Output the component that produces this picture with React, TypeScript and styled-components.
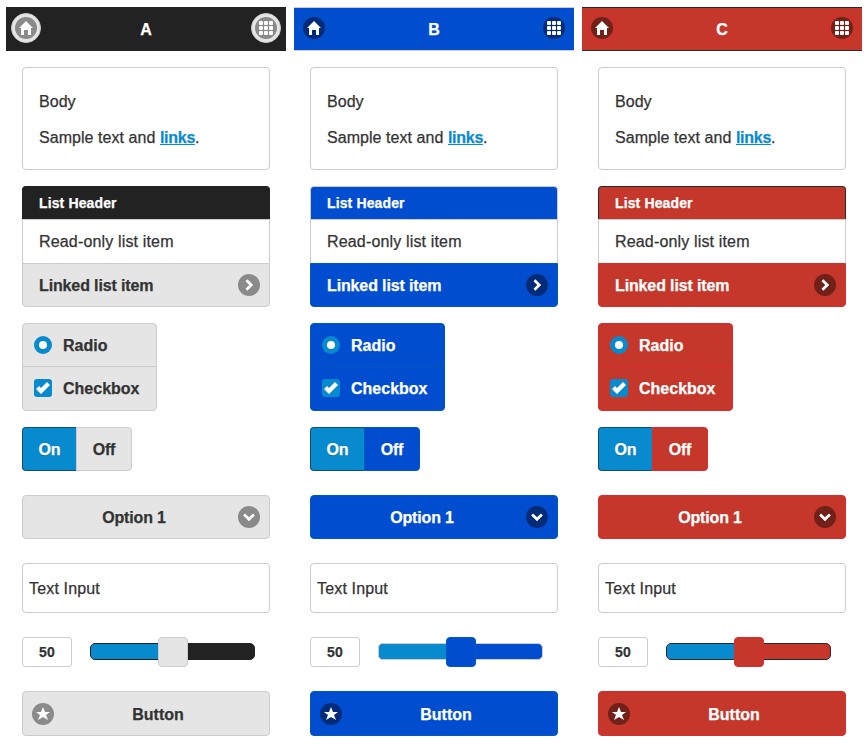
import React from "react";
import styled, { createGlobalStyle, ThemeProvider } from "styled-components";

const GlobalStyle = createGlobalStyle`
  * { box-sizing: border-box; }
  body { margin: 0; background: #fff; }
  body, input, button { font-family: "Liberation Sans", Arial, Helvetica, sans-serif; -webkit-text-stroke: 0.25px currentColor; }
`;

interface Swatch {
  name: string;
  bar: string;
  barBorder: string;
  button: string;
  buttonBorder: string;
  buttonText: string;
  disc: string;
}

const swatches: Swatch[] = [
  { name: "A", bar: "#222", barBorder: "#222", button: "#e5e5e5", buttonBorder: "#ccc", buttonText: "#333", disc: "#8a8a8a" },
  { name: "B", bar: "#004ecf", barBorder: "#ccc", button: "#004ecf", buttonBorder: "#0058b8", buttonText: "#fff", disc: "#002b78" },
  { name: "C", bar: "#c4372a", barBorder: "#2a2a2a", button: "#c4372a", buttonBorder: "#dc2c2e", buttonText: "#fff", disc: "#71201a" },
];

const active = "#078ace";

const Page = styled.main`
  display: flex;
  gap: 8px;
  padding: 7px 6px 11px;
  color: #333;
  font-size: 16px;
  line-height: 20px;
  white-space: nowrap;
`;

const Column = styled.section`
  width: 280px;
`;

const Bar = styled.header`
  display: flex;
  align-items: center;
  justify-content: space-between;
  height: 44px;
  padding: 0 5px 2px;
  background: ${({ theme }) => theme.bar};
  border: solid ${({ theme }) => theme.barBorder};
  border-width: 1px 0;
`;

const Title = styled.h1`
  margin: 4px 0 0;
  color: #fff;
  font-size: 16px;
`;

const RoundButton = styled.button`
  display: grid;
  place-items: center;
  width: 30px;
  height: 30px;
  padding: 0;
  background: ${({ theme }) => theme.button};
  border: 1px solid ${({ theme }) => theme.buttonBorder};
  border-radius: 50%;
`;

const Disc = styled.span`
  display: grid;
  flex: none;
  place-items: center;
  width: 22px;
  height: 22px;
  background: ${({ theme }) => theme.disc};
  border-radius: 50%;
`;

const Glyph = styled.svg`
  display: block;
  width: 14px;
  height: 14px;
  fill: #fff;
`;

const Content = styled.div`
  padding: 16px 16px 0;
`;

const Panel = styled.div`
  height: 103px;
  padding: 24px 16px;
  border: 1px solid #ccc;
  border-radius: 4px;
`;

const Paragraph = styled.p`
  margin: 0 0 16px;
  letter-spacing: 0.05px;
`;

const Link = styled.a`
  color: ${active};
  font-weight: bold;
  letter-spacing: -0.25px;
  text-decoration: underline;
`;

const List = styled.ul`
  margin: 16px 0;
  padding: 0;
  list-style: none;
`;

const ListHeader = styled.li`
  height: 33px;
  padding: 6px 16px;
  color: #fff;
  font-size: 14px;
  font-weight: bold;
  letter-spacing: 0.13px;
  background: ${({ theme }) => theme.bar};
  border: 1px solid ${({ theme }) => theme.barBorder};
  border-bottom: 0;
  border-radius: 4px 4px 0 0;
`;

const ListItem = styled.li`
  height: 44px;
  padding: 12px 16px 10px;
  letter-spacing: 0.16px;
  border: 1px solid #ccc;
  border-bottom: 0;
`;

const LinkedItem = styled.li`
  display: flex;
  align-items: center;
  justify-content: space-between;
  height: 44px;
  padding: 0 9px 0 16px;
  color: ${({ theme }) => theme.buttonText};
  font-weight: bold;
  letter-spacing: -0.13px;
  background: ${({ theme }) => theme.button};
  border: 1px solid ${({ theme }) => theme.buttonBorder};
  border-radius: 0 0 4px 4px;
`;

const Label = styled.span`
  padding-top: 2px;
`;

const Choices = styled.div`
  width: 135px;
  height: 88px;
  color: ${({ theme }) => theme.buttonText};
  font-weight: bold;
  background: ${({ theme }) => theme.button};
  border: 1px solid ${({ theme }) => theme.buttonBorder};
  border-radius: 4px;
`;

const Choice = styled.label<{ $divided?: boolean }>`
  display: flex;
  align-items: center;
  gap: 11px;
  height: ${({ $divided }) => ($divided ? 43 : 42)}px;
  padding-left: 11px;
  border-top: ${({ $divided, theme }) => ($divided ? `1px solid ${theme.buttonBorder}` : "0")};
`;

const Mark = styled.span<{ $round?: boolean }>`
  display: grid;
  place-items: center;
  width: 18px;
  height: 18px;
  background: ${active};
  border-radius: ${({ $round }) => ($round ? "50%" : "3px")};
`;

const Dot = styled.span`
  width: 8px;
  height: 8px;
  background: #fff;
  border-radius: 50%;
`;

const Toggle = styled.div`
  display: flex;
  margin: 16px 0 24px;
  font-weight: bold;
`;

const ToggleOn = styled.span`
  display: grid;
  place-items: center;
  width: 54px;
  height: 44px;
  padding-top: 2px;
  color: #fff;
  background: ${active};
  border: 1px solid #144b70;
  border-right: 0;
  border-radius: 4px 0 0 4px;
  text-shadow: 0 1px 0 #1c5f88;
`;

const ToggleOff = styled.span`
  display: grid;
  place-items: center;
  width: 56px;
  height: 44px;
  padding-top: 2px;
  letter-spacing: -0.2px;
  color: ${({ theme }) => theme.buttonText};
  background: ${({ theme }) => theme.button};
  border: 1px solid ${({ theme }) => theme.buttonBorder};
  border-radius: 0 4px 4px 0;
`;

const WideButton = styled.button<{ $height: number }>`
  display: grid;
  grid-template-columns: 22px 1fr 22px;
  align-items: center;
  width: 100%;
  height: ${({ $height }) => $height}px;
  padding: 0 9px;
  color: ${({ theme }) => theme.buttonText};
  font-size: 16px;
  font-weight: bold;
  background: ${({ theme }) => theme.button};
  border: 1px solid ${({ theme }) => theme.buttonBorder};
  border-radius: 4px;
`;

const SelectLabel = styled.span`
  grid-column: 2;
  padding: 2px 24px 0 0;
  letter-spacing: -0.15px;
`;

const ButtonLabel = styled.span`
  padding-top: 2px;
  padding-left: 24px;
`;

const WideDisc = styled(Disc)`
  margin: 0;
`;

const TextField = styled.input`
  display: block;
  width: 100%;
  height: 50px;
  margin: 24px 0;
  padding: 2px 6px 0;
  color: #333;
  font-size: 16px;
  letter-spacing: 0.16px;
  background: #fff;
  border: 1px solid #ccc;
  border-radius: 4px;
`;

const SliderRow = styled.div`
  display: flex;
  align-items: center;
  gap: 18px;
  margin-bottom: 24px;
`;

const NumberField = styled.input`
  width: 50px;
  height: 30px;
  padding: 0;
  color: #333;
  font-size: 14px;
  font-weight: bold;
  letter-spacing: 0.3px;
  text-align: center;
  background: #fff;
  border: 1px solid #ccc;
  border-radius: 3px;
`;

const Track = styled.div`
  position: relative;
  width: 165px;
  height: 17px;
  margin-top: -1px;
  background: ${({ theme }) => theme.bar};
  border: 1px solid ${({ theme }) => theme.barBorder};
  border-radius: 5px;
`;

const Fill = styled.div`
  width: 50%;
  height: 100%;
  background: ${active};
  border-radius: 4px 0 0 4px;
`;

const Handle = styled.div`
  position: absolute;
  top: -7px;
  left: 67px;
  width: 30px;
  height: 30px;
  background: ${({ theme }) => theme.button};
  border: 1px solid ${({ theme }) => theme.buttonBorder};
  border-radius: 4px;
`;

const shapes = {
  home: "M7 0 0 7H2V14H5V9H9V14H12V7H14Z",
  right: "M3.5 3.2 5.4 1.2 11.2 7 5.4 12.8 3.5 10.8 7.2 7Z",
  down: "M3 3.5 1.2 5.4 7 11.2 12.8 5.4 11 3.5 7 7.2Z",
  check: "M14 4 11 1 5 7 3 5 0 8 5 13Z",
  star: "M7 0 9 5H14L10 8 12 13 7 10 2 13 4 8 0 5H5Z",
};

const Icon = ({ shape }: { shape: keyof typeof shapes }) => (
  <Glyph viewBox="0 0 14 14"><path d={shapes[shape]} /></Glyph>
);

const GridIcon = () => (
  <Glyph viewBox="0 0 14 14">
    {[0, 5, 10].map((y) => [0, 5, 10].map((x) => (
      <rect key={`${x}-${y}`} x={x} y={y} width="4" height="4" rx="0.9" />
    )))}
  </Glyph>
);

const SwatchColumn = ({ swatch }: { swatch: Swatch }) => (
  <ThemeProvider theme={swatch}>
    <Column>
      <Bar>
        <RoundButton aria-label="Home"><Disc><Icon shape="home" /></Disc></RoundButton>
        <Title>{swatch.name}</Title>
        <RoundButton aria-label="Grid"><Disc><GridIcon /></Disc></RoundButton>
      </Bar>
      <Content>
        <Panel>
          <Paragraph>Body</Paragraph>
          <Paragraph>Sample text and <Link>links</Link>.</Paragraph>
        </Panel>
        <List>
          <ListHeader>List Header</ListHeader>
          <ListItem>Read-only list item</ListItem>
          <LinkedItem>
            <Label>Linked list item</Label>
            <Disc><Icon shape="right" /></Disc>
          </LinkedItem>
        </List>
        <Choices>
          <Choice><Mark $round><Dot /></Mark><Label>Radio</Label></Choice>
          <Choice $divided><Mark><Icon shape="check" /></Mark><Label>Checkbox</Label></Choice>
        </Choices>
        <Toggle>
          <ToggleOn>On</ToggleOn>
          <ToggleOff>Off</ToggleOff>
        </Toggle>
        <WideButton $height={44}>
          <SelectLabel>Option 1</SelectLabel>
          <WideDisc><Icon shape="down" /></WideDisc>
        </WideButton>
        <TextField defaultValue="Text Input" />
        <SliderRow>
          <NumberField defaultValue="50" />
          <Track><Fill /><Handle /></Track>
        </SliderRow>
        <WideButton $height={45}>
          <WideDisc><Icon shape="star" /></WideDisc>
          <ButtonLabel>Button</ButtonLabel>
        </WideButton>
      </Content>
    </Column>
  </ThemeProvider>
);

export default function App() {
  return (
    <>
      <GlobalStyle />
      <Page>
        {swatches.map((swatch) => <SwatchColumn key={swatch.name} swatch={swatch} />)}
      </Page>
    </>
  );
}
